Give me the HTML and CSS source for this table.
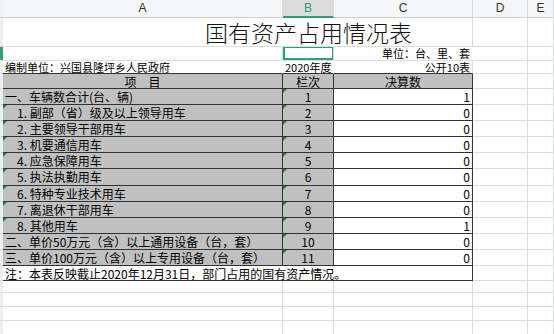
FILE: index.html
```html
<!DOCTYPE html>
<html lang="zh-CN">
<head>
<meta charset="utf-8">
<title>国有资产占用情况表</title>
<link rel="stylesheet" href="styles.css">
</head>
<body>
<div class="sheet">
  <!-- column header row -->
  <div class="rh corner"></div>
  <div class="ch">A</div>
  <div class="ch sel">B</div>
  <div class="ch">C</div>
  <div class="ch">D</div>
  <div class="ch">E</div>

  <!-- title -->
  <div class="rh"></div>
  <div class="c span3 title">国有资产占用情况表</div>
  <div class="c"></div>
  <div class="c"></div>

  <!-- unit row -->
  <div class="rh on"></div>
  <div class="c"></div>
  <div class="c active"></div>
  <div class="c nv r small">单位：台、里、套</div>
  <div class="c"></div>
  <div class="c"></div>

  <!-- org row -->
  <div class="rh"></div>
  <div class="c nv topline small">编制单位：兴国县隆坪乡人民政府</div>
  <div class="c nv topline ctr small">2020年度</div>
  <div class="c topline r small">公开10表</div>
  <div class="c"></div>
  <div class="c"></div>

  <!-- table head -->
  <div class="rh"></div>
  <div class="t g ctr">项　目</div>
  <div class="t g ctr">栏次</div>
  <div class="t g ctr last">决算数</div>
  <div class="c"></div>
  <div class="c"></div>

  <div class="rh"></div>
  <div class="t g">一、车辆数合计(台、辆)</div>
  <div class="t g ctr mk">1</div>
  <div class="t r last">1</div>
  <div class="c"></div>
  <div class="c"></div>

  <div class="rh"></div>
  <div class="t g ind mk">1. 副部（省）级及以上领导用车</div>
  <div class="t g ctr mk">2</div>
  <div class="t r last">0</div>
  <div class="c"></div>
  <div class="c"></div>

  <div class="rh"></div>
  <div class="t g ind mk">2. 主要领导干部用车</div>
  <div class="t g ctr mk">3</div>
  <div class="t r last">0</div>
  <div class="c"></div>
  <div class="c"></div>

  <div class="rh"></div>
  <div class="t g ind mk">3. 机要通信用车</div>
  <div class="t g ctr mk">4</div>
  <div class="t r last">0</div>
  <div class="c"></div>
  <div class="c"></div>

  <div class="rh"></div>
  <div class="t g ind mk">4. 应急保障用车</div>
  <div class="t g ctr mk">5</div>
  <div class="t r last">0</div>
  <div class="c"></div>
  <div class="c"></div>

  <div class="rh"></div>
  <div class="t g ind mk">5. 执法执勤用车</div>
  <div class="t g ctr mk">6</div>
  <div class="t r last">0</div>
  <div class="c"></div>
  <div class="c"></div>

  <div class="rh"></div>
  <div class="t g ind mk">6. 特种专业技术用车</div>
  <div class="t g ctr mk">7</div>
  <div class="t r last">0</div>
  <div class="c"></div>
  <div class="c"></div>

  <div class="rh"></div>
  <div class="t g ind mk">7. 离退休干部用车</div>
  <div class="t g ctr mk">8</div>
  <div class="t r last">0</div>
  <div class="c"></div>
  <div class="c"></div>

  <div class="rh"></div>
  <div class="t g ind mk">8. 其他用车</div>
  <div class="t g ctr mk">9</div>
  <div class="t r last">1</div>
  <div class="c"></div>
  <div class="c"></div>

  <div class="rh"></div>
  <div class="t g">二、单价50万元（含）以上通用设备（台，套）</div>
  <div class="t g ctr mk">10</div>
  <div class="t r last">0</div>
  <div class="c"></div>
  <div class="c"></div>

  <div class="rh"></div>
  <div class="t g">三、单价100万元（含）以上专用设备（台，套）</div>
  <div class="t g ctr mk">11</div>
  <div class="t r last">0</div>
  <div class="c"></div>
  <div class="c"></div>

  <div class="rh"></div>
  <div class="t span3 last">注：本表反映截止2020年12月31日，部门占用的国有资产情况。</div>
  <div class="c"></div>
  <div class="c"></div>

  <div class="rh"></div><div class="c"></div><div class="c"></div><div class="c"></div><div class="c"></div><div class="c"></div>
  <div class="rh"></div><div class="c"></div><div class="c"></div><div class="c"></div><div class="c"></div><div class="c"></div>
  <div class="rh"></div><div class="c"></div><div class="c"></div><div class="c"></div><div class="c"></div><div class="c"></div>
  <div class="rh"></div><div class="c"></div><div class="c"></div><div class="c"></div><div class="c"></div><div class="c"></div>
</div>
</body>
</html>
```

FILE: styles.css
```css
html, body {
  margin: 0;
  padding: 0;
  background: #ffffff;
  overflow: hidden;
}

.sheet {
  display: grid;
  grid-template-columns: 3px 280px 51px 139px 55px 26px;
  grid-template-rows: 18px 29px 14px 13px 15px 16px 16px 16px 16px 16px 17px 16px 16px 16px 16px 16px 15px 12px 14px 14px 14px;
  width: 554px;
  font-family: "Noto Sans CJK SC", "Noto Sans", sans-serif;
  font-size: 12px;
  color: #000;
}

.sheet > div {
  box-sizing: border-box;
  overflow: hidden;
  white-space: nowrap;
  position: relative;
}

/* row header strip */
.rh {
  background: #eceef1;
  border-bottom: 1px solid #d6d9de;
}
.rh.on {
  background: #2ba36a;
}
.corner {
  background: #f3f4f6;
  border-bottom: 1px solid #cfd2d7;
}

/* column header */
.ch {
  background: #f5f6f7;
  border-right: 1px solid #d6d9de;
  border-bottom: 1px solid #cfd2d7;
  font-family: "Liberation Sans", "Noto Sans", sans-serif;
  font-size: 12px;
  line-height: 17px;
  text-align: center;
  color: #333;
}
.ch:last-child {
  text-align: left;
  padding-left: 19px;
}
.ch.sel {
  background: #dcdcdc;
  color: #2ba36a;
  border-bottom: 2px solid #2ba36a;
}

/* ordinary cells */
.c {
  border-right: 1px solid #d8dce3;
  border-bottom: 1px solid #d8dce3;
  line-height: 14px;
  padding: 0 2px;
}
.c.nv {
  border-right-color: transparent;
}
.sheet > .c.small {
  font-size: 11px;
  line-height: 13px;
  overflow: visible;
}
.sheet > .c.topline {
  border-bottom: 1px solid #333;
  line-height: 12px;
}

.span3 {
  grid-column: span 3;
}

.sheet > .title {
  font-size: 23px;
  line-height: 29px;
  padding-left: 202px;
  border-right: 1px solid #d8dce3;
  color: #111;
  font-weight: 300;
  overflow: visible;
}

.active::after {
  content: "";
  position: absolute;
  left: 0;
  top: -1px;
  right: -1px;
  bottom: 0;
  border: 2px solid #2ba36a;
}
.active::before {
  content: "";
  position: absolute;
  right: -2px;
  bottom: -2px;
  width: 4px;
  height: 4px;
  background: #2ba36a;
  z-index: 2;
}

/* table cells */
.t {
  border-right: 1px solid #333;
  border-bottom: 1px solid #333;
  line-height: 15px;
  padding: 0 2px;
}
.g {
  background: #c0c0c0;
}
.ind {
  padding-left: 14px;
}
.ctr {
  text-align: center;
}
.r {
  text-align: right;
}

.mk::before {
  content: "";
  position: absolute;
  left: 0;
  top: 0;
  width: 0;
  height: 0;
  border-top: 4px solid #1e8a1e;
  border-right: 4px solid transparent;
}
```
